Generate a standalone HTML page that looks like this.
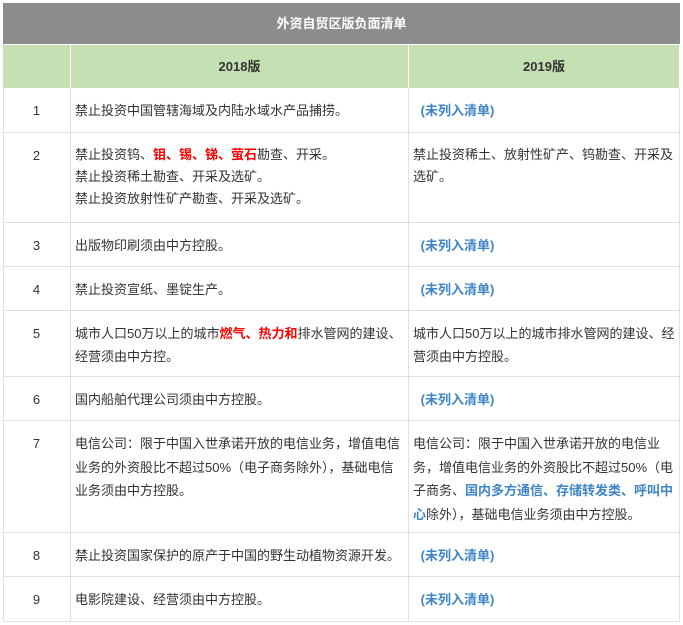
<!DOCTYPE html>
<html><head><meta charset="utf-8"><style>
body{margin:0;background:#fff;width:683px;height:625px;position:relative;overflow:hidden;font-family:"Liberation Sans","Noto Sans CJK SC",sans-serif;font-size:13px;color:#333}
.c{position:absolute;box-sizing:border-box;border-right:1px solid #e0e0e0;border-bottom:1px solid #e0e0e0;line-height:23px;padding-top:11px}
.n{text-align:center}
.t{padding-left:4px;padding-right:2px}
.r{color:#f00;font-weight:bold}
.b{color:#3d85c6;font-weight:bold;margin-left:4px}
.h{position:absolute;left:3px;top:3px;width:677px;height:41px;background:#8c8c8c;color:#fff;font-weight:bold;text-align:center;line-height:41px;font-size:13px}
.g{position:absolute;top:44px;height:44px;background:#c5e0b3;box-sizing:border-box;border-right:1px solid #fff;border-top:1px solid #fff;text-align:center;line-height:43px;font-weight:bold;color:#333}
</style></head><body>
<div class="h">外资自贸区版负面清单</div>
<div class="g" style="left:3px;width:68px"></div>
<div class="g" style="left:71px;width:338px">2018版</div>
<div class="g" style="left:409px;width:271px">2019版</div>
<div style="position:absolute;left:3px;top:88px;width:1px;height:534px;background:#e0e0e0"></div>

<div class="c n" style="left:3px;top:88px;width:68px;height:45px">1</div>
<div class="c t" style="left:71px;top:88px;width:338px;height:45px">禁止投资中国管辖海域及内陆水域水产品捕捞。</div>
<div class="c t" style="left:409px;top:88px;width:271px;height:45px">&nbsp;<span class="b">(未列入清单)</span></div>

<div class="c n" style="left:3px;top:133px;width:68px;height:90px">2</div>
<div class="c t" style="left:71px;top:133px;width:338px;height:90px;line-height:22px">禁止投资钨、<span class="r">钼、锡、锑、萤石</span>勘查、开采。<br>禁止投资稀土勘查、开采及选矿。<br>禁止投资放射性矿产勘查、开采及选矿。</div>
<div class="c t" style="left:409px;top:133px;width:271px;height:90px;line-height:22px">禁止投资稀土、放射性矿产、钨勘查、开采及选矿。</div>

<div class="c n" style="left:3px;top:223px;width:68px;height:44px">3</div>
<div class="c t" style="left:71px;top:223px;width:338px;height:44px">出版物印刷须由中方控股。</div>
<div class="c t" style="left:409px;top:223px;width:271px;height:44px">&nbsp;<span class="b">(未列入清单)</span></div>

<div class="c n" style="left:3px;top:267px;width:68px;height:44px">4</div>
<div class="c t" style="left:71px;top:267px;width:338px;height:44px">禁止投资宣纸、墨锭生产。</div>
<div class="c t" style="left:409px;top:267px;width:271px;height:44px">&nbsp;<span class="b">(未列入清单)</span></div>

<div class="c n" style="left:3px;top:311px;width:68px;height:66px">5</div>
<div class="c t" style="left:71px;top:311px;width:338px;height:66px">城市人口50万以上的城市<span class="r">燃气、热力和</span>排水管网的建设、经营须由中方控。</div>
<div class="c t" style="left:409px;top:311px;width:271px;height:66px">城市人口50万以上的城市排水管网的建设、经营须由中方控股。</div>

<div class="c n" style="left:3px;top:377px;width:68px;height:44px">6</div>
<div class="c t" style="left:71px;top:377px;width:338px;height:44px">国内船舶代理公司须由中方控股。</div>
<div class="c t" style="left:409px;top:377px;width:271px;height:44px">&nbsp;<span class="b">(未列入清单)</span></div>

<div class="c n" style="left:3px;top:421px;width:68px;height:112px">7</div>
<div class="c t" style="left:71px;top:421px;width:338px;height:112px;line-height:23.5px">电信公司：限于中国入世承诺开放的电信业务，增值电信业务的外资股比不超过50%（电子商务除外），基础电信业务须由中方控股。</div>
<div class="c t" style="left:409px;top:421px;width:271px;height:112px;line-height:23.5px">电信公司：限于中国入世承诺开放的电信业务，增值电信业务的外资股比不超过50%（电子商务、<span class="r" style="color:#3d85c6">国内多方通信、存储转发类、呼叫中心</span>除外），基础电信业务须由中方控股。</div>

<div class="c n" style="left:3px;top:533px;width:68px;height:44px">8</div>
<div class="c t" style="left:71px;top:533px;width:338px;height:44px">禁止投资国家保护的原产于中国的野生动植物资源开发。</div>
<div class="c t" style="left:409px;top:533px;width:271px;height:44px">&nbsp;<span class="b">(未列入清单)</span></div>

<div class="c n" style="left:3px;top:577px;width:68px;height:45px">9</div>
<div class="c t" style="left:71px;top:577px;width:338px;height:45px">电影院建设、经营须由中方控股。</div>
<div class="c t" style="left:409px;top:577px;width:271px;height:45px">&nbsp;<span class="b">(未列入清单)</span></div>
</body></html>
